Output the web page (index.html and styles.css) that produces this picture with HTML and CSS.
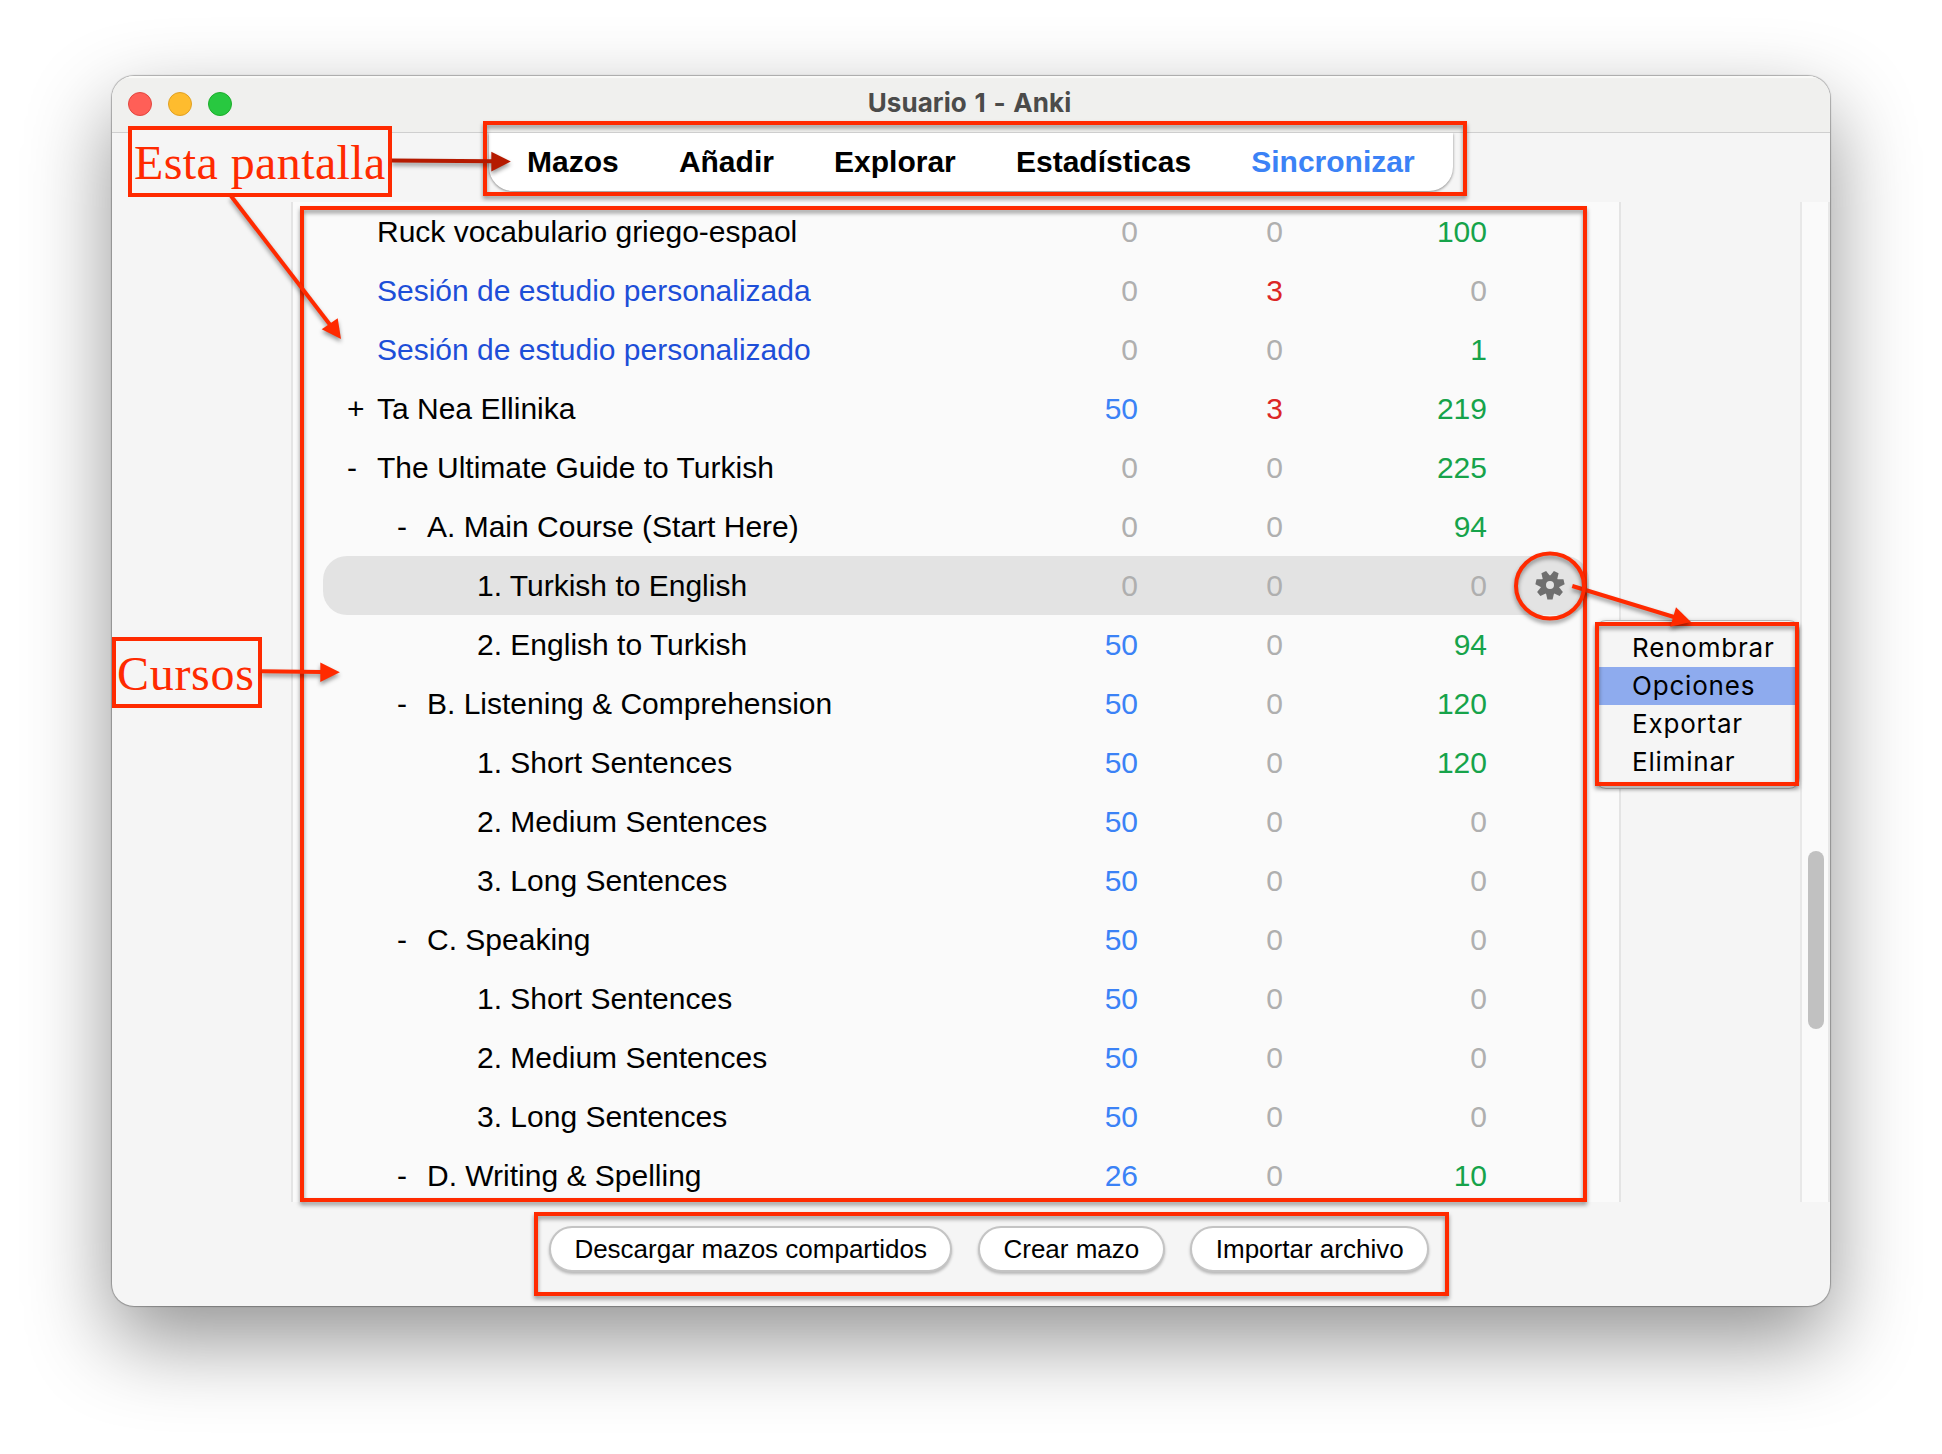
FILE: index.html
```html
<!DOCTYPE html>
<html lang="es">
<head>
<meta charset="utf-8">
<title>Usuario 1 - Anki</title>
<link rel="stylesheet" href="styles.css">
</head>
<body>
<div class="window">
  <header class="titlebar">
    <div class="lights"><i class="light close"></i><i class="light minimise"></i><i class="light zoom"></i></div>
    <h1 class="title">Usuario 1 - Anki</h1>
  </header>
  <div class="toolbar">
    <nav class="tray">
      <a>Mazos</a><a>Añadir</a><a>Explorar</a><a>Estadísticas</a><a class="sync">Sincronizar</a>
    </nav>
  </div>
  <main class="main">
    <section class="decks">
      <div class="row"><span class="name"><b></b>Ruck vocabulario griego-espaol</span><span>0</span><span>0</span><span class="due">100</span></div>
      <div class="row"><span class="name filtered"><b></b>Sesión de estudio personalizada</span><span>0</span><span class="learn">3</span><span>0</span></div>
      <div class="row"><span class="name filtered"><b></b>Sesión de estudio personalizado</span><span>0</span><span>0</span><span class="due">1</span></div>
      <div class="row"><span class="name"><b>+</b>Ta Nea Ellinika</span><span class="new">50</span><span class="learn">3</span><span class="due">219</span></div>
      <div class="row"><span class="name"><b>-</b>The Ultimate Guide to Turkish</span><span>0</span><span>0</span><span class="due">225</span></div>
      <div class="row"><span class="name l1"><b>-</b>A. Main Course (Start Here)</span><span>0</span><span>0</span><span class="due">94</span></div>
      <div class="row active"><span class="name l2"><b></b>1. Turkish to English</span><span>0</span><span>0</span><span>0</span>
        <svg class="gear" viewBox="-15 -15 30 30" width="30" height="30"><g fill="#6f6f6f"><path id="tooth" d="M-4.2 7.5 L-2.6 14.4 H2.6 L4.2 7.5Z"/><use href="#tooth" transform="rotate(51.43)"/><use href="#tooth" transform="rotate(102.86)"/><use href="#tooth" transform="rotate(154.29)"/><use href="#tooth" transform="rotate(205.71)"/><use href="#tooth" transform="rotate(257.14)"/><use href="#tooth" transform="rotate(308.57)"/></g><circle r="6.7" fill="none" stroke="#6f6f6f" stroke-width="5.4"/></svg>
      </div>
      <div class="row"><span class="name l2"><b></b>2. English to Turkish</span><span class="new">50</span><span>0</span><span class="due">94</span></div>
      <div class="row"><span class="name l1"><b>-</b>B. Listening &amp; Comprehension</span><span class="new">50</span><span>0</span><span class="due">120</span></div>
      <div class="row"><span class="name l2"><b></b>1. Short Sentences</span><span class="new">50</span><span>0</span><span class="due">120</span></div>
      <div class="row"><span class="name l2"><b></b>2. Medium Sentences</span><span class="new">50</span><span>0</span><span>0</span></div>
      <div class="row"><span class="name l2"><b></b>3. Long Sentences</span><span class="new">50</span><span>0</span><span>0</span></div>
      <div class="row"><span class="name l1"><b>-</b>C. Speaking</span><span class="new">50</span><span>0</span><span>0</span></div>
      <div class="row"><span class="name l2"><b></b>1. Short Sentences</span><span class="new">50</span><span>0</span><span>0</span></div>
      <div class="row"><span class="name l2"><b></b>2. Medium Sentences</span><span class="new">50</span><span>0</span><span>0</span></div>
      <div class="row"><span class="name l2"><b></b>3. Long Sentences</span><span class="new">50</span><span>0</span><span>0</span></div>
      <div class="row"><span class="name l1"><b>-</b>D. Writing &amp; Spelling</span><span class="new">26</span><span>0</span><span class="due">10</span></div>
    </section>
    <div class="scrollbar"><div class="thumb"></div></div>
  </main>
  <footer class="bottom">
    <button>Descargar mazos compartidos</button><button>Crear mazo</button><button>Importar archivo</button>
  </footer>
</div>

<div class="menu">
  <div>Renombrar</div><div class="selected"><span>Opciones</span></div><div>Exportar</div><div>Eliminar</div>
</div>

<div class="frame frame-nav"></div>
<div class="frame frame-decks"></div>
<div class="frame frame-buttons"></div>
<div class="frame frame-menu"></div>
<div class="label label-screen"><span>Esta pantalla</span></div>
<div class="label label-courses"><span>Cursos</span></div>
<svg class="arrows" width="1942" height="1454" viewBox="0 0 1942 1454">
  <g class="arrow dark"><path d="M392 160.5L493 161.3"/><polygon points="491.3,151.7 510.8,161.5 491.3,171.5"/></g>
  <g class="arrow"><path d="M231 196L331 326"/><polygon points="337.7,318.3 341,339 321.7,329.3"/></g>
  <g class="arrow"><path d="M262 671.3L322 672"/><polygon points="320.3,662.5 339.8,672.3 320.3,682"/></g>
  <g class="arrow"><path d="M1572.3 586L1674 617"/><polygon points="1676,607.3 1691,622 1670.3,626.7"/></g>
  <g class="arrow"><ellipse cx="1550" cy="586" rx="34" ry="32.5"/></g>
</svg>
</body>
</html>
```
FILE: styles.css
```css
* { box-sizing: border-box; }

body {
  margin: 0;
  width: 1942px;
  height: 1454px;
  padding: 76px 112px 0;
  background: #fff;
  position: relative;
  overflow: hidden;
  font-family: "Liberation Sans", Arial, sans-serif;
  color: #000;
}

.window {
  width: 1718px;
  height: 1230px;
  display: flex;
  flex-direction: column;
  background: #f5f5f5;
  border-radius: 22px;
  overflow: hidden;
  box-shadow: 0 0 1px 1px rgba(0, 0, 0, .28), 0 34px 84px rgba(0, 0, 0, .43);
}

.titlebar {
  height: 57px;
  flex: none;
  display: grid;
  grid-template-columns: 200px 1fr 200px;
  align-items: center;
  background: #f0f0ee;
  border-bottom: 1px solid #cfcfcf;
  box-shadow: inset 0 2px 1px #fafaf8;
}
.lights { display: flex; gap: 16px; padding-left: 16px; }
.light { width: 24px; height: 24px; border-radius: 50%; border: 1px solid; }
.close { background: #ff5f57; border-color: #e2463f; }
.minimise { background: #febc2e; border-color: #e0a023; }
.zoom { background: #28c840; border-color: #1dad2b; }
.title {
  margin: 0;
  text-align: center;
  font: 700 26px/30px Inter, sans-serif;
  letter-spacing: .05px;
  word-spacing: 1.5px;
  color: #4b4b4a;
  padding: 0 3px 2px 0;
}

.toolbar { height: 69px; flex: none; display: flex; justify-content: center; }
.tray {
  width: 964px;
  height: 58px;
  display: flex;
  gap: 60.2px;
  padding-left: 38px;
  background: #fff;
  border-radius: 0 0 24px 24px;
  box-shadow: 0 1px 3px rgba(0, 0, 0, .45);
  clip-path: inset(0 -6px -6px -6px);
  font-weight: 700;
  font-size: 30px;
  line-height: 58px;
}
.sync { color: #3b82f6; }

.main { height: 1000px; flex: none; display: flex; }
.decks {
  width: 1330px;
  height: 1000px;
  margin: 0 179px;
  padding: 0 30px;
  flex: none;
  overflow: hidden;
  background: #fafafa;
  border: solid #e4e4e4;
  border-width: 0 2px;
}
.row {
  height: 59px;
  display: grid;
  grid-template-columns: 670px 145px 204px 101px;
  grid-template-columns: 670px 145px 145px 204px 101px;
  line-height: 59px;
  font-size: 30px;
  text-align: right;
  color: #afafaf;
  border-radius: 24px;
}
.active { background: #e3e3e3; }
.name { text-align: left; padding-left: 24px; color: #000; white-space: nowrap; }
.name b { display: inline-block; width: 30px; font-weight: 400; }
.l1 { padding-left: 74px; }
.l2 { padding-left: 124px; }
.filtered { color: #1d4ed8; }
.new { color: #3b82f6; }
.learn { color: #dc2626; }
.due { color: #16a34a; }
.gear { margin: 14px 0 0 48px; }

.scrollbar {
  width: 30px;
  padding: 649px 4px 0 6px;
  background: #fafafa;
  border: solid #e8e8e8;
  border-width: 0 2px;
}
.thumb { width: 16px; height: 178px; border-radius: 8px; background: #c1c1c1; }

.bottom { display: flex; justify-content: center; gap: 25.5px; padding: 24px 0 0 36px; }
.bottom button {
  height: 46px;
  padding: 0 23.5px;
  border: 2px solid #c4c4c4;
  border-radius: 23px;
  background: #fff;
  box-shadow: 0 2px 3px rgba(0, 0, 0, .25);
  font: 26px/40px "Liberation Sans", Arial, sans-serif;
  color: #000;
}

/* Context menu of the deck's gear button */
.menu {
  position: absolute;
  left: 1595px;
  top: 620px;
  width: 205px;
  height: 169px;
  padding-top: 8px;
  border: 1px solid #b5b5b5;
  border-radius: 11px;
  background: #f5f5f5;
  box-shadow: 0 0 4px rgba(0, 0, 0, .12);
  font: 26px/38px Inter, sans-serif;
  letter-spacing: .8px;
}
.menu div { height: 38px; padding-left: 36px; }
.menu .selected { background: #8eabee; }

/* Annotations over the window */
.frame { position: absolute; border: 4px solid #ff2a00; filter: drop-shadow(0 3px 2px rgba(0, 0, 0, .4)); }
.frame-nav { left: 483px; top: 121px; width: 984px; height: 75px; }
.frame-decks { left: 300px; top: 206px; width: 1287px; height: 996px; }
.frame-buttons { left: 534px; top: 1212px; width: 915px; height: 84px; }
.frame-menu { left: 1595px; top: 622px; width: 204px; height: 164px; }
.label {
  position: absolute;
  height: 71px;
  border: 4px solid #ff2a00;
  background: #f5f5f5;
  color: #ff2a00;
  font: 48px/66px "Liberation Serif", "Times New Roman", serif;
  white-space: nowrap;
}
.label-screen { left: 128px; top: 126px; width: 264px; padding-left: 2px; letter-spacing: .4px; }
.label-courses { left: 112px; top: 637px; width: 150px; padding-left: 1px; letter-spacing: .7px; }
.arrows { position: absolute; left: 0; top: 0; }
.arrow { fill: #ff2a00; stroke: none; filter: drop-shadow(0 3px 2px rgba(0, 0, 0, .4)); }
.arrow path, .arrow ellipse { fill: none; stroke: #ff2a00; stroke-width: 4; }
.arrow.dark { fill: #b51a00; }
.arrow.dark path { stroke: #b51a00; }
```
